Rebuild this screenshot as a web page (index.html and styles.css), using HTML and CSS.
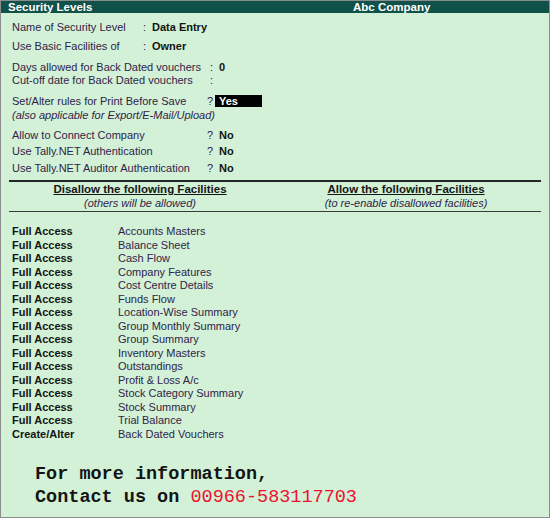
FILE: index.html
```html
<!DOCTYPE html>
<html lang="en">
<head>
    <meta charset="UTF-8">
    <title>Security Levels</title>
    <link rel="stylesheet" href="styles.css">
</head>
<body>
    <div class="screen">
        <div class="titlebar">
            <span>Security Levels</span>
            <span>Abc Company</span>
        </div>

        <div class="form">
            <div class="group g-name">
                <div class="row"><span class="label">Name of Security Level</span><span class="sep">:</span><b>Data Entry</b></div>
                <div class="row gap"><span class="label">Use Basic Facilities of</span><span class="sep">:</span><b>Owner</b></div>
            </div>

            <div class="group g-days">
                <div class="row"><span class="label">Days allowed for Back Dated vouchers</span><span class="sep">:</span><b>0</b></div>
                <div class="row"><span class="label">Cut-off date for Back Dated vouchers</span><span class="sep">:</span></div>
            </div>

            <div class="group g-ask">
                <div class="row"><span class="label">Set/Alter rules for Print Before Save</span><span class="sep">?</span><b class="picked">Yes</b></div>
                <div class="row note"><i>(also applicable for Export/E-Mail/Upload)</i></div>
            </div>

            <div class="group g-ask loose">
                <div class="row"><span class="label">Allow to Connect Company</span><span class="sep">?</span><b>No</b></div>
                <div class="row"><span class="label">Use Tally.NET Authentication</span><span class="sep">?</span><b>No</b></div>
                <div class="row"><span class="label">Use Tally.NET Auditor Authentication</span><span class="sep">?</span><b>No</b></div>
            </div>
        </div>

        <div class="facilities">
            <div class="col-head">
                <b>Disallow the following Facilities</b>
                <i>(others will be allowed)</i>
            </div>
            <div class="col-head">
                <b>Allow the following Facilities</b>
                <i>(to re-enable disallowed facilities)</i>
            </div>
        </div>

        <div class="access-list" id="access-list"></div>

        <div class="contact">
            <p>For more information,</p>
            <p>Contact us on <span class="phone">00966-583117703</span></p>
        </div>
    </div>

    <script>
        // rights given to this security level
        const rights = [
            ['Full Access', 'Accounts Masters'],
            ['Full Access', 'Balance Sheet'],
            ['Full Access', 'Cash Flow'],
            ['Full Access', 'Company Features'],
            ['Full Access', 'Cost Centre Details'],
            ['Full Access', 'Funds Flow'],
            ['Full Access', 'Location-Wise Summary'],
            ['Full Access', 'Group Monthly Summary'],
            ['Full Access', 'Group Summary'],
            ['Full Access', 'Inventory Masters'],
            ['Full Access', 'Outstandings'],
            ['Full Access', 'Profit & Loss A/c'],
            ['Full Access', 'Stock Category Summary'],
            ['Full Access', 'Stock Summary'],
            ['Full Access', 'Trial Balance'],
            ['Create/Alter', 'Back Dated Vouchers']
        ];

        const list = document.getElementById('access-list');
        rights.forEach(([type, report]) => {
            const row = document.createElement('div');
            row.className = 'access-row';
            const t = document.createElement('b');
            t.textContent = type;
            const r = document.createElement('span');
            r.textContent = report;
            row.append(t, r);
            list.appendChild(row);
        });
    </script>
</body>
</html>
```

FILE: styles.css
```css
body {
    margin: 0;
    font-family: "Liberation Sans", Arial, sans-serif;
    font-size: 11px;
    color: #30234a;
}
.screen {
    width: 548px;
    height: 516px;
    border: 1px solid #8c8c8c;
    background-color: #d3f1d6;
    overflow: hidden;
}
.titlebar {
    display: grid;
    grid-template-columns: 345px 1fr;
    height: 12px;
    line-height: 12px;
    padding-left: 7px;
    background-color: #10524a;
    color: #fff;
    font-size: 11.5px;
    font-weight: bold;
}
.form {
    padding: 7.5px 0 0 11px;
}
.row {
    display: flex;
    line-height: 13px;
    white-space: nowrap;
}
.row b {
    color: #141414;
}
.group {
    margin-top: 7px;
}
.group:first-child {
    margin-top: 0;
}
.g-name .gap {
    margin-top: 6px;
}
.g-name .label {
    width: 131px;
}
.g-name .sep {
    width: 9px;
}
.g-days {
    margin-top: 8px;
}
.g-days .label {
    width: 198px;
}
.g-days .sep {
    width: 9px;
}
.g-ask .label {
    width: 195px;
}
.g-ask .sep {
    width: 12px;
}
.g-ask .row {
    line-height: 14px;
}
.picked {
    background-color: #000;
    color: #fff !important;
    width: 43px;
    padding-left: 4px;
    margin-left: -4px;
    line-height: 12px;
    margin-top: 1px;
    height: 12px;
}
.g-ask.loose {
    margin-top: 5px;
}
.g-ask.loose .row {
    line-height: 16.5px;
}
.facilities {
    display: grid;
    grid-template-columns: 262px 1fr;
    margin: 4px 8px 0 8px;
    border-top: 2px solid #262626;
    border-bottom: 1px solid #3a3a3a;
    padding: 1px 0 1px 0;
    text-align: center;
}
.col-head b {
    display: block;
    line-height: 13px;
    font-size: 11.5px;
    color: #161616;
    text-decoration: underline;
}
.col-head i {
    display: block;
    line-height: 14px;
}
.access-list {
    padding: 13px 0 0 11px;
}
.access-row {
    display: grid;
    grid-template-columns: 106px 1fr;
    line-height: 13.5px;
}
.access-row b {
    color: #141414;
}
.contact {
    padding: 22px 0 0 34px;
    font-family: "Liberation Mono", "Courier New", monospace;
    font-size: 18.5px;
    font-weight: bold;
    color: #141414;
}
.contact p {
    margin: 0;
    line-height: 23px;
}
.phone {
    color: #ec1230;
    font-weight: normal;
}
```
